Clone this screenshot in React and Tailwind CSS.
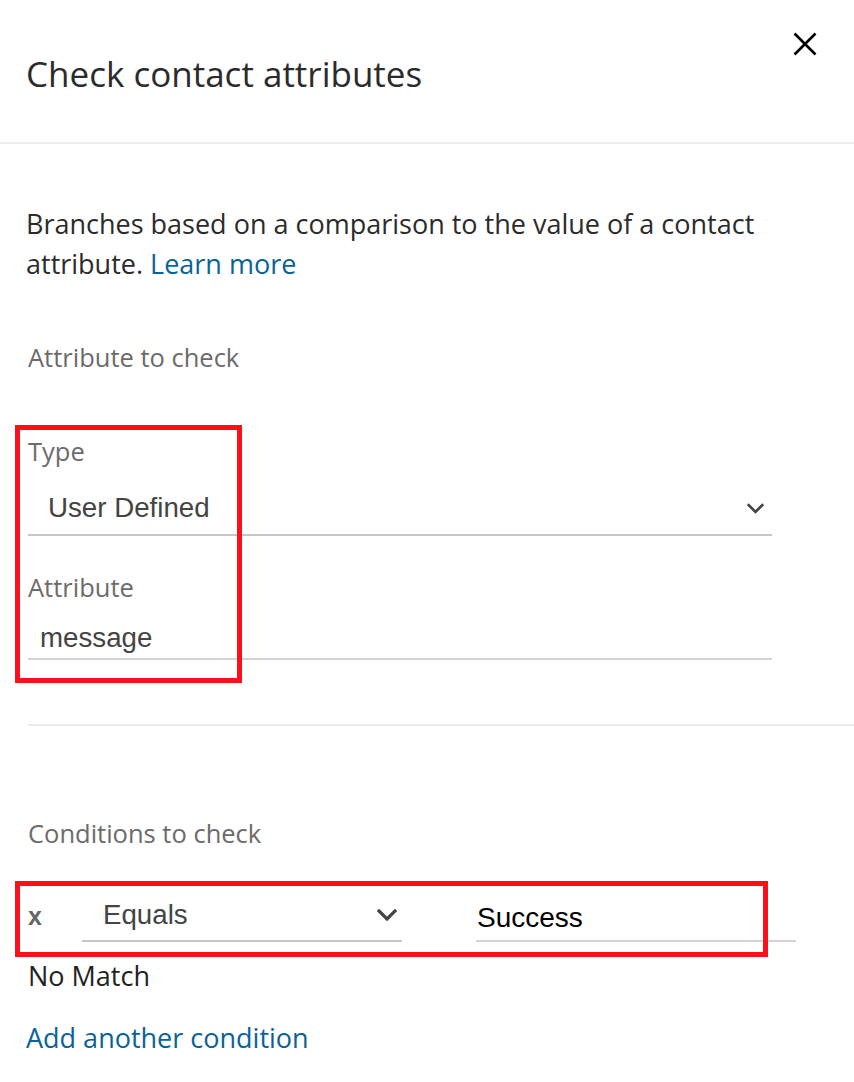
const Chevron = ({ className }) => (
  <svg viewBox="0 0 20 12" className={className} fill="none">
    <path d="M2 2l8 8 8-8" stroke="#444" strokeWidth="3.2" strokeLinecap="square" />
  </svg>
);

const Label = ({ children, className = "" }) => (
  <div className={`text-[25.5px] leading-[30px] text-[#6b6b6b] ${className}`}>{children}</div>
);

export default function App() {
  return (
    <div className="relative w-[854px] h-[1082px] overflow-hidden bg-white font-['Open_Sans',sans-serif] text-[#2a2a2a]">
      {/* header */}
      <div className="flex items-start justify-between pl-[26px] pr-[37px] h-[144px] border-b-2 border-[#ebebeb]">
        <h1 className="mt-[52px] text-[35px] leading-[44px] text-[#2b2b2b]">Check contact attributes</h1>
        <svg viewBox="0 0 24 24" className="mt-[32px] w-[24px] h-[24px]" fill="none">
          <path d="M1.5 1.5l21 21M22.5 1.5l-21 21" stroke="#000" strokeWidth="2.6" />
        </svg>
      </div>

      <div className="pl-[26px]">
        <p className="mt-[60px] pr-[68px] text-[27px] leading-[40px] text-[#2b2b2b]">
          Branches based on a comparison to the value of a contact attribute.{" "}
          <span className="text-[#0a6398]">Learn more</span>
        </p>

        <Label className="mt-[58px] pl-[2px]">Attribute to check</Label>

        {/* attribute fields */}
        <div className="mt-[64px] pl-[2px] w-[746px]">
          <Label>Type</Label>
          <div className="mt-[27px] flex items-center justify-between border-b-2 border-[#c6c6c6] pb-[11px] pl-[20px] pr-[8px]">
            <span className="font-['Liberation_Sans',sans-serif] text-[27.7px] leading-[30px] text-[#444]">User Defined</span>
            <Chevron className="w-[17px] h-[11px]" />
          </div>
          <Label className="mt-[36px]">Attribute</Label>
          <div className="mt-[21px] border-b-2 border-[#d4d4d4] pb-[5px] pl-[12px]">
            <span className="font-['Liberation_Sans',sans-serif] text-[27.7px] leading-[30px] text-[#444]">message</span>
          </div>
        </div>

        <div className="mt-[64px] ml-[2px] border-b-2 border-[#ebebeb]" />

        <Label className="mt-[92px] pl-[2px]">Conditions to check</Label>

        {/* condition row */}
        <div className="mt-[52px] flex items-start pl-[2px]">
          <span className="w-[54px] pt-[1px] font-['Liberation_Sans',sans-serif] font-bold text-[25px] leading-[30px] text-[#666]">x</span>
          <div className="w-[320px] flex items-center justify-between border-b-2 border-[#c6c6c6] pb-[10px] pl-[21px] pr-[5px]">
            <span className="font-['Liberation_Sans',sans-serif] text-[27.7px] leading-[30px] text-[#444]">Equals</span>
            <Chevron className="w-[20px] h-[12px]" />
          </div>
          <div className="ml-[74px] w-[320px] border-b-2 border-[#d4d4d4] pt-[3px] pb-[7px] pl-[1px]">
            <span className="font-['Liberation_Sans',sans-serif] text-[28px] leading-[30px] text-black">Success</span>
          </div>
        </div>

        <div className="mt-[17px] pl-[2px] text-[27px] leading-[34px] text-[#222]">No Match</div>
        <div className="mt-[28px] text-[27px] leading-[34px] text-[#0a6398]">Add another condition</div>
      </div>

      {/* annotation boxes */}
      <div className="absolute left-[15px] top-[425px] w-[227px] h-[258px] border-[5px] border-[#fe0f19]" />
      <div className="absolute left-[15px] top-[881px] w-[753px] h-[76px] border-[5px] border-[#fe0f19]" />
    </div>
  );
}
